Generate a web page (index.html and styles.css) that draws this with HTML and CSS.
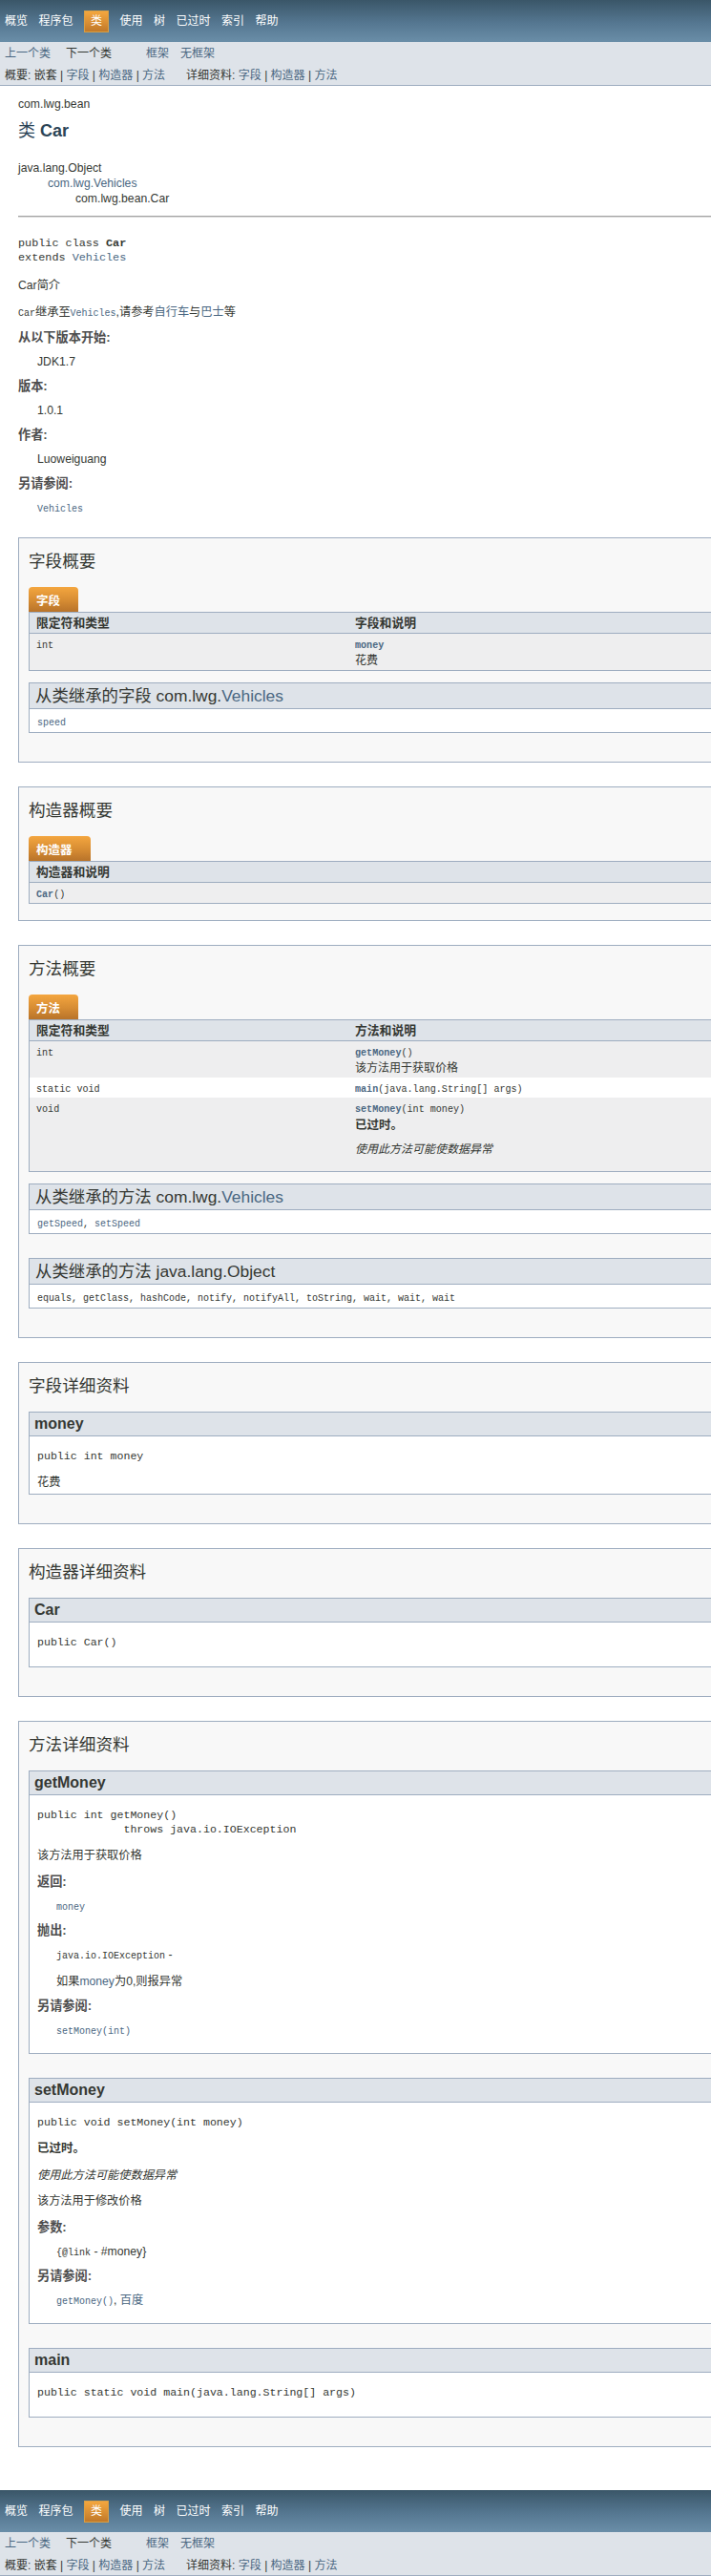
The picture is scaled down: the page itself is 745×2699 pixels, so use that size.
FILE: index.html
```html
<!DOCTYPE html>
<html lang="zh-CN">
<head>
<meta charset="utf-8">
<title>Car</title>
<link rel="stylesheet" href="styles.css">
</head>
<body>
<div class="topnav">
  <ul class="navlist">
    <li>概览</li>
    <li>程序包</li>
    <li class="navsel">类</li>
    <li>使用</li>
    <li>树</li>
    <li>已过时</li>
    <li>索引</li>
    <li>帮助</li>
  </ul>
</div>
<div class="subnav">
  <div class="subrow">
    <a href="#">上一个类</a>
    <span class="sub-next">下一个类</span>
    <a href="#" class="sub-frames">框架</a>
    <a href="#" class="sub-noframes">无框架</a>
  </div>
  <div class="subrow subrow-small">
    <span>概要:&nbsp;嵌套&nbsp;|&nbsp;<a href="#">字段</a>&nbsp;|&nbsp;<a href="#">构造器</a>&nbsp;|&nbsp;<a href="#">方法</a></span>
    <span class="sub-detail">详细资料:&nbsp;<a href="#">字段</a>&nbsp;|&nbsp;<a href="#">构造器</a>&nbsp;|&nbsp;<a href="#">方法</a></span>
  </div>
</div>

<div class="header">
  <div class="pkg">com.lwg.bean</div>
  <h2 class="title">类 <b>Car</b></h2>
</div>

<div class="container">
  <div class="tree">
    <div>java.lang.Object</div>
    <div class="tree-1"><a href="#">com.lwg.Vehicles</a></div>
    <div class="tree-2">com.lwg.bean.Car</div>
  </div>
  <div class="description">
    <hr class="rule">
    <pre class="sig">public class <b>Car</b>
extends <a href="#">Vehicles</a></pre>
    <div class="block first-block">Car简介</div>
    <div class="block"><code class="ic">Car</code>继承至<code class="ic"><a href="#">Vehicles</a></code>,请参考<a href="#">自行车</a>与<a href="#">巴士</a>等</div>
    <dl class="notes">
      <dt>从以下版本开始:</dt>
      <dd>JDK1.7</dd>
      <dt>版本:</dt>
      <dd>1.0.1</dd>
      <dt>作者:</dt>
      <dd>Luoweiguang</dd>
      <dt>另请参阅:</dt>
      <dd><code class="ic"><a href="#">Vehicles</a></code></dd>
    </dl>
  </div>

  <section class="block-list">
    <h3 class="sec-title">字段概要</h3>
    <div class="tab">字段</div>
    <table class="summary">
      <thead><tr><th class="c1">限定符和类型</th><th>字段和说明</th></tr></thead>
      <tbody>
        <tr class="row-gray">
          <td><code class="tc">int</code></td>
          <td><code class="tc"><a class="strong" href="#">money</a></code><div class="cell-desc">花费</div></td>
        </tr>
      </tbody>
    </table>
    <div class="inherit">
      <h3 class="inh-title">从类继承的字段 com.lwg.<a href="#">Vehicles</a></h3>
      <div class="inh-body"><code class="ic"><a href="#">speed</a></code></div>
    </div>
  </section>

  <section class="block-list">
    <h3 class="sec-title">构造器概要</h3>
    <div class="tab">构造器</div>
    <table class="summary">
      <thead><tr><th>构造器和说明</th></tr></thead>
      <tbody>
        <tr class="row-gray">
          <td><code class="tc"><a class="strong" href="#">Car</a>()</code></td>
        </tr>
      </tbody>
    </table>
  </section>

  <section class="block-list">
    <h3 class="sec-title">方法概要</h3>
    <div class="tab">方法</div>
    <table class="summary">
      <thead><tr><th class="c1">限定符和类型</th><th>方法和说明</th></tr></thead>
      <tbody>
        <tr class="row-gray">
          <td><code class="tc">int</code></td>
          <td><code class="tc"><a class="strong" href="#">getMoney</a>()</code><div class="cell-desc">该方法用于获取价格</div></td>
        </tr>
        <tr class="row-white">
          <td><code class="tc">static void</code></td>
          <td><code class="tc"><a class="strong" href="#">main</a>(java.lang.String[]&nbsp;args)</code></td>
        </tr>
        <tr class="row-gray">
          <td><code class="tc">void</code></td>
          <td><code class="tc"><a class="strong" href="#">setMoney</a>(int&nbsp;money)</code>
            <div class="cell-deprecated">已过时。</div>
            <div class="cell-italic">使用此方法可能使数据异常</div></td>
        </tr>
      </tbody>
    </table>
    <div class="inherit">
      <h3 class="inh-title">从类继承的方法 com.lwg.<a href="#">Vehicles</a></h3>
      <div class="inh-body"><code class="ic"><a href="#">getSpeed</a>, <a href="#">setSpeed</a></code></div>
    </div>
    <div class="inherit">
      <h3 class="inh-title">从类继承的方法 java.lang.Object</h3>
      <div class="inh-body"><code class="ic">equals, getClass, hashCode, notify, notifyAll, toString, wait, wait, wait</code></div>
    </div>
  </section>

  <section class="block-list">
    <h3 class="sec-title">字段详细资料</h3>
    <div class="detail">
      <h4 class="det-title">money</h4>
      <div class="det-body">
        <pre class="det-sig">public&nbsp;int money</pre>
        <div class="block">花费</div>
      </div>
    </div>
  </section>

  <section class="block-list">
    <h3 class="sec-title">构造器详细资料</h3>
    <div class="detail">
      <h4 class="det-title">Car</h4>
      <div class="det-body">
        <pre class="det-sig det-last">public&nbsp;Car()</pre>
      </div>
    </div>
  </section>

  <section class="block-list">
    <h3 class="sec-title">方法详细资料</h3>
    <div class="detail">
      <h4 class="det-title">getMoney</h4>
      <div class="det-body">
        <pre class="det-sig">public&nbsp;int&nbsp;getMoney()
             throws java.io.IOException</pre>
        <div class="block">该方法用于获取价格</div>
        <dl class="notes">
          <dt>返回:</dt>
          <dd><code class="ic"><a href="#">money</a></code></dd>
          <dt>抛出:</dt>
          <dd><code class="ic">java.io.IOException</code> -
            <div class="dd-block">如果<a href="#">money</a>为0,则报异常</div></dd>
          <dt>另请参阅:</dt>
          <dd><code class="ic"><a href="#">setMoney(int)</a></code></dd>
        </dl>
      </div>
    </div>
    <div class="detail">
      <h4 class="det-title">setMoney</h4>
      <div class="det-body">
        <pre class="det-sig">public&nbsp;void&nbsp;setMoney(int&nbsp;money)</pre>
        <div class="deprecated-label">已过时。</div>
        <div class="deprecated-text">使用此方法可能使数据异常</div>
        <div class="block gap-block">该方法用于修改价格</div>
        <dl class="notes">
          <dt>参数:</dt>
          <dd><code class="ic">{@link</code> - #money}</dd>
          <dt>另请参阅:</dt>
          <dd><code class="ic"><a href="#">getMoney()</a></code>, <a href="#">百度</a></dd>
        </dl>
      </div>
    </div>
    <div class="detail">
      <h4 class="det-title">main</h4>
      <div class="det-body">
        <pre class="det-sig det-last">public static&nbsp;void&nbsp;main(java.lang.String[]&nbsp;args)</pre>
      </div>
    </div>
  </section>
</div>

<div class="bottomnav">
  <div class="topnav">
    <ul class="navlist">
      <li>概览</li>
      <li>程序包</li>
      <li class="navsel">类</li>
      <li>使用</li>
      <li>树</li>
      <li>已过时</li>
      <li>索引</li>
      <li>帮助</li>
    </ul>
  </div>
  <div class="subnav">
    <div class="subrow">
      <a href="#">上一个类</a>
      <span class="sub-next">下一个类</span>
      <a href="#" class="sub-frames">框架</a>
      <a href="#" class="sub-noframes">无框架</a>
    </div>
    <div class="subrow subrow-small">
      <span>概要:&nbsp;嵌套&nbsp;|&nbsp;<a href="#">字段</a>&nbsp;|&nbsp;<a href="#">构造器</a>&nbsp;|&nbsp;<a href="#">方法</a></span>
      <span class="sub-detail">详细资料:&nbsp;<a href="#">字段</a>&nbsp;|&nbsp;<a href="#">构造器</a>&nbsp;|&nbsp;<a href="#">方法</a></span>
    </div>
  </div>
</div>
</body>
</html>
```

FILE: styles.css
```css
* {
  box-sizing: border-box;
}

html,
body {
  margin: 0;
  padding: 0;
}

body {
  font-family: "Liberation Sans", "Noto Sans CJK SC", sans-serif;
  font-size: 12.2px;
  line-height: 16px;
  color: #353833;
  background: #ffffff;
}

a {
  color: #4a6782;
  text-decoration: none;
}

code,
pre {
  font-family: "Liberation Mono", "Noto Sans CJK SC", monospace;
}

/* ---------- navigation ---------- */
.topnav {
  height: 44px;
  display: flex;
  align-items: center;
  padding-left: 5px;
  background: linear-gradient(to bottom, #3a5668 0%, #557791 55%, #6a8ea8 100%);
}

.navlist {
  display: flex;
  align-items: center;
  gap: 11.5px;
  list-style: none;
  margin: 0;
  padding: 0;
}

.navlist li {
  color: #ffffff;
  font-size: 12px;
  line-height: 14px;
}

.navlist .navsel {
  padding: 3.5px 6px;
  border: 1px solid #d9a045;
  background: linear-gradient(to bottom, #f4a63e 0%, #d98f34 55%, #c07829 100%);
}

.subnav {
  height: 46px;
  padding: 4px 5px 2px;
  background: #dee3e9;
  border-bottom: 1px solid #9eadc0;
}

.subrow {
  display: flex;
  align-items: center;
  font-size: 12px;
  line-height: 16px;
}

.subrow-small {
  margin-top: 7px;
}

.sub-next {
  margin-left: 16px;
}

.sub-frames {
  margin-left: 36px;
}

.sub-noframes {
  margin-left: 12px;
}

.sub-detail {
  margin-left: 22px;
}

.bottomnav {
  margin-top: 45px;
}

/* ---------- header ---------- */
.header {
  padding: 11px 19px 0;
}

.pkg {
  line-height: 16px;
}

.title {
  margin: 10px 0 0;
  font-size: 18px;
  line-height: 20px;
  font-weight: normal;
  color: #2c4557;
}

.title b {
  font-weight: bold;
}

/* ---------- class description ---------- */
.container {
  padding-left: 19px;
}

.tree {
  margin-top: 21px;
  line-height: 16px;
}

.tree-1 {
  margin-left: 31px;
}

.tree-2 {
  margin-left: 60px;
}

.description {
  padding-bottom: 11px;
}

.rule {
  margin: 10px 0 0;
  height: 2px;
  border: 0;
  border-top: 1px solid #a3a3a3;
  border-bottom: 1px solid #dcdcdc;
}

.sig {
  margin: 20px 0 0;
  font-size: 11.8px;
  line-height: 15px;
}

.sig b {
  font-weight: bold;
}

.block {
  margin-top: 12px;
  line-height: 16px;
}

.first-block {
  margin-top: 13px;
}

.ic {
  font-size: 10px;
  line-height: 1;
}

.notes {
  margin: 11px 0 12px;
}

.notes dt {
  margin-top: 10px;
  font-size: 13.2px;
  line-height: 16px;
  font-weight: bold;
  color: #4e4e4e;
}

.notes dt:first-child {
  margin-top: 0;
}

.notes dd {
  margin: 9px 0 0 20px;
  line-height: 16px;
}

.dd-block {
  margin-top: 12px;
}

/* ---------- sections ---------- */
.block-list {
  border: 1px solid #9eadc0;
  border-right: 0;
  background: #f8f8f8;
  padding: 15px 0 5px 10px;
}

.block-list + .block-list {
  margin-top: 25px;
}

.sec-title {
  margin: 0 0 18px;
  font-size: 17.6px;
  line-height: 18px;
  font-weight: normal;
  color: #353833;
}

.tab {
  width: fit-content;
  height: 26px;
  padding: 4px 19px 0 8px;
  line-height: 22px;
  font-size: 12.5px;
  font-weight: bold;
  color: #ffffff;
  border-radius: 4px 4px 0 0;
  background: linear-gradient(to bottom, #f4a63f 0%, #d68c33 55%, #b8732a 100%);
}

.summary {
  width: 100%;
  table-layout: fixed;
  border-collapse: separate;
  border-spacing: 0;
  border-left: 1px solid #9eadc0;
  border-bottom: 1px solid #9eadc0;
  margin-bottom: 12px;
}

.summary th {
  padding: 0 7px;
  background: #dee3e9;
  border-top: 1px solid #9eadc0;
  border-bottom: 1px solid #9eadc0;
  text-align: left;
  font-size: 12.8px;
  line-height: 21px;
  font-weight: bold;
}

.summary th.c1 {
  width: 334px;
}

.summary td {
  padding: 3px 7px 2px;
  vertical-align: top;
  font-size: 12px;
  line-height: 16px;
}

.row-gray td {
  background: #eeeeef;
}

.row-white td {
  background: #ffffff;
}

.tc {
  font-size: 10.1px;
  line-height: 1;
}

.strong {
  font-weight: bold;
}

.cell-desc {
  margin-top: 1px;
}

.cell-deprecated {
  margin-top: 2px;
  font-size: 12.5px;
  font-weight: bold;
}

.cell-italic {
  margin: 9px 0 13px;
  font-style: italic;
}

/* ---------- inherited members ---------- */
.inherit {
  margin-bottom: 25px;
  background: #ffffff;
  border-left: 1px solid #9eadc0;
  border-bottom: 1px solid #9eadc0;
}

.inh-title {
  margin: 0;
  padding-left: 6px;
  background: #dee3e9;
  border-top: 1px solid #9eadc0;
  border-bottom: 1px solid #9eadc0;
  font-size: 17.4px;
  line-height: 26px;
  font-weight: normal;
}

.inh-body {
  padding: 5px 8px 3px;
  line-height: 16px;
}

/* ---------- details ---------- */
.detail {
  margin-bottom: 25px;
  background: #ffffff;
  border-left: 1px solid #9eadc0;
  border-bottom: 1px solid #9eadc0;
}

.det-title {
  margin: 0;
  padding-left: 5px;
  background: #dee3e9;
  border-top: 1px solid #9eadc0;
  border-bottom: 1px solid #9eadc0;
  font-size: 16px;
  line-height: 24px;
  font-weight: bold;
}

.det-body {
  padding: 13px 8px 4px;
}

.det-sig {
  margin: 0 0 12px;
  font-size: 11.6px;
  line-height: 15px;
}

.det-last {
  margin-bottom: 14px;
}

.det-body .block:first-of-type {
  margin-top: 0;
}

.det-body .gap-block {
  margin-top: 11px;
}

.deprecated-label {
  font-size: 12.5px;
  font-weight: bold;
  line-height: 16px;
}

.deprecated-text {
  margin-top: 12px;
  font-style: italic;
  line-height: 16px;
}

.det-body .notes {
  margin-top: 12px;
}
```
